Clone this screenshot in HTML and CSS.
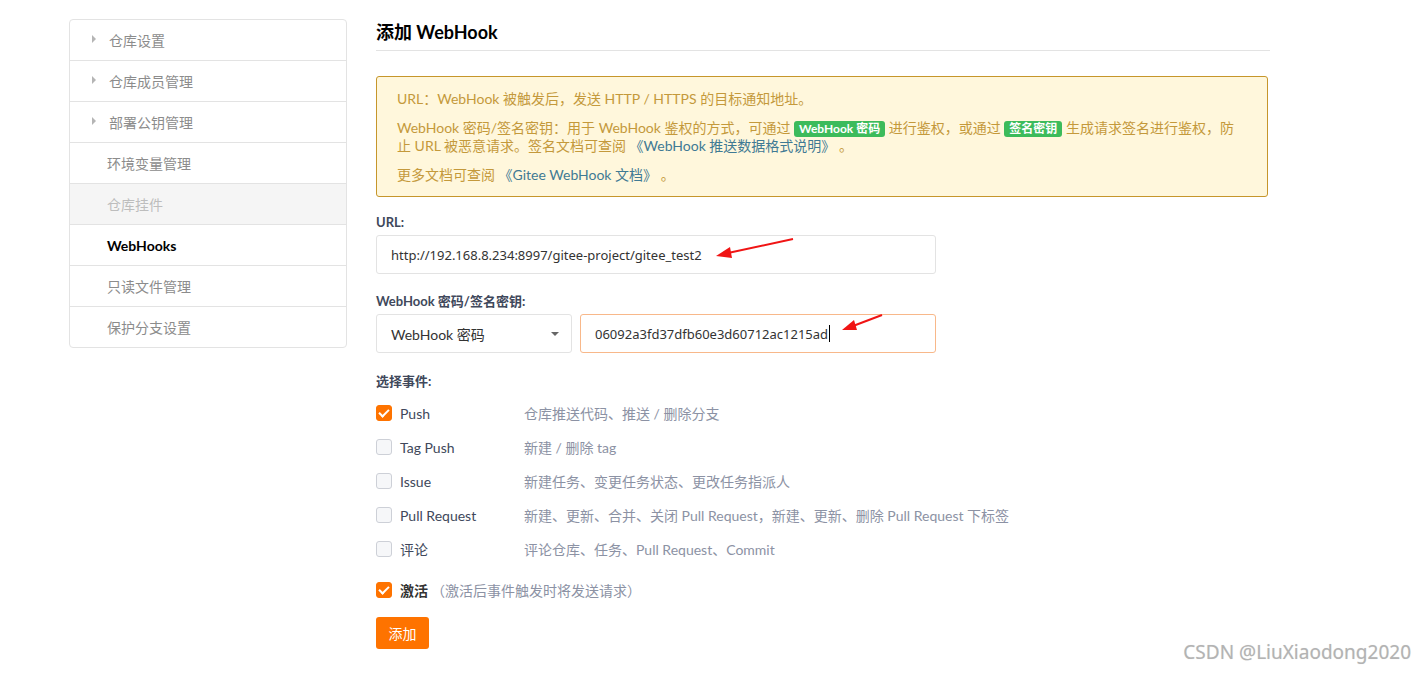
FILE: index.html
```html
<!DOCTYPE html>
<html lang="zh-CN">
<head>
    <meta charset="UTF-8">
    <title>添加 WebHook</title>
    <link rel="stylesheet" href="styles.css">
</head>
<body>
    <div class="page">
        <!-- Settings menu -->
        <ul class="side-menu">
            <li class="menu-item has-sub"><span class="caret-right"></span>仓库设置</li>
            <li class="menu-item has-sub"><span class="caret-right"></span>仓库成员管理</li>
            <li class="menu-item has-sub"><span class="caret-right"></span>部署公钥管理</li>
            <li class="menu-item">环境变量管理</li>
            <li class="menu-item disabled">仓库挂件</li>
            <li class="menu-item active">WebHooks</li>
            <li class="menu-item">只读文件管理</li>
            <li class="menu-item">保护分支设置</li>
        </ul>

        <div class="main">
            <h2 class="main-title">添加 WebHook</h2>

            <div class="notice">
                <p>URL：WebHook 被触发后，发送 HTTP / HTTPS 的目标通知地址。</p>
                <p>WebHook 密码/签名密钥：用于 WebHook 鉴权的方式，可通过 <span class="tag">WebHook 密码</span> 进行鉴权，或通过 <span class="tag">签名密钥</span> 生成请求签名进行鉴权，防止 URL 被恶意请求。签名文档可查阅 <a href="#">《WebHook 推送数据格式说明》</a> 。</p>
                <p>更多文档可查阅 <a href="#">《Gitee WebHook 文档》</a> 。</p>
            </div>

            <form class="hook-form">
                <label class="field-label">URL:</label>
                <div class="text-field url-field">http://192.168.8.234:8997/gitee-project/gitee_test2</div>

                <label class="field-label">WebHook 密码/签名密钥:</label>
                <div class="secret-row">
                    <div class="select-field">WebHook 密码<span class="caret-down"></span></div>
                    <div class="text-field focused">06092a3fd37dfb60e3d60712ac1215ad<span class="text-caret"></span></div>
                </div>

                <label class="field-label">选择事件:</label>
                <div class="events">
                    <div class="event-row">
                        <span class="check checked"></span>
                        <span class="event-name">Push</span>
                        <span class="event-desc">仓库推送代码、推送 / 删除分支</span>
                    </div>
                    <div class="event-row">
                        <span class="check"></span>
                        <span class="event-name">Tag Push</span>
                        <span class="event-desc">新建 / 删除 tag</span>
                    </div>
                    <div class="event-row">
                        <span class="check"></span>
                        <span class="event-name">Issue</span>
                        <span class="event-desc">新建任务、变更任务状态、更改任务指派人</span>
                    </div>
                    <div class="event-row">
                        <span class="check"></span>
                        <span class="event-name">Pull Request</span>
                        <span class="event-desc">新建、更新、合并、关闭 Pull Request，新建、更新、删除 Pull Request 下标签</span>
                    </div>
                    <div class="event-row">
                        <span class="check"></span>
                        <span class="event-name">评论</span>
                        <span class="event-desc">评论仓库、任务、Pull Request、Commit</span>
                    </div>
                </div>

                <div class="active-row">
                    <span class="check checked"></span>
                    <span class="active-name">激活</span>
                    <span class="active-hint">（激活后事件触发时将发送请求）</span>
                </div>

                <button type="button" class="btn-add">添加</button>
            </form>
        </div>
    </div>

    <!-- Red annotation arrows drawn over the screenshot -->
    <svg class="annotations" width="1425" height="673" viewBox="0 0 1425 673">
        <line x1="793" y1="239" x2="728" y2="253" stroke="#f01414" stroke-width="2"/>
        <polygon points="716,256 730,247 732,258" fill="#f01414"/>
        <line x1="882" y1="315" x2="853" y2="326" stroke="#f01414" stroke-width="2"/>
        <polygon points="842,330 854,320 857,330" fill="#f01414"/>
    </svg>

    <div class="watermark">CSDN @LiuXiaodong2020</div>
</body>
</html>
```

FILE: styles.css
```css
:root {
    --border: #e3e3e3;
    --text-dark: #40485b;
    --text-gray: #8c92a4;
    --orange: #fe7300;
    --notice-bg: #fff7dc;
    --notice-border: #c6962b;
    --notice-text: #c4993b;
    --link: #3f7a94;
    --green: #3cbb5b;
}

html,
body {
    min-height: 100vh;
}

body {
    margin: 0;
    padding: 0;
    font-family: Lato, "Noto Sans CJK SC", sans-serif;
    font-size: 14px;
    color: var(--text-dark);
    background: #fff;
    position: relative;
}

.page {
    display: flex;
    align-items: flex-start;
    padding: 19px 0 0 69px;
    gap: 29px;
}

/* Left menu */
.side-menu {
    list-style: none;
    margin: 0;
    padding: 0;
    width: 276px;
    border: 1px solid var(--border);
    border-radius: 4px;
    overflow: hidden;
}

.menu-item {
    height: 40px;
    display: flex;
    align-items: center;
    padding-left: 37px;
    font-size: 14px;
    color: #8c8c8c;
    border-bottom: 1px solid var(--border);
}

.menu-item:last-child {
    border-bottom: none;
}

.menu-item.has-sub {
    padding-left: 22px;
}

.caret-right {
    width: 0;
    height: 0;
    border-top: 4px solid transparent;
    border-bottom: 4px solid transparent;
    border-left: 4px solid #b5b5b5;
    margin-right: 13px;
    margin-top: -2px;
}

.menu-item.disabled {
    background: #f5f5f5;
    color: #bdbdbd;
}

.menu-item.active {
    color: #000;
    font-weight: bold;
}

/* Main column */
.main {
    width: 894px;
}

.main-title {
    margin: 0;
    font-size: 18px;
    font-weight: bold;
    color: #000;
    line-height: 26px;
    padding-bottom: 5px;
    border-bottom: 1px solid var(--border);
}

.notice {
    box-sizing: border-box;
    margin-top: 25px;
    width: 892px;
    padding: 13px 28px 12px 20px;
    background: var(--notice-bg);
    border: 1px solid var(--notice-border);
    border-radius: 3px;
    color: var(--notice-text);
    line-height: 18px;
}

.notice p {
    margin: 0 0 11px;
}

.notice p:last-child {
    margin-bottom: 0;
}

.notice a {
    color: var(--link);
    text-decoration: none;
}

.tag {
    display: inline-block;
    background: var(--green);
    color: #fff;
    font-size: 12px;
    font-weight: bold;
    line-height: 16px;
    padding: 0 5px;
    border-radius: 3px;
}

/* Form */
.hook-form {
    margin-top: 16px;
}

.field-label {
    display: block;
    font-size: 13px;
    font-weight: bold;
    line-height: 18px;
    margin-bottom: 4px;
}

.text-field {
    box-sizing: border-box;
    width: 560px;
    height: 39px;
    display: flex;
    align-items: center;
    padding-left: 14px;
    border: 1px solid var(--border);
    border-radius: 3px;
    font-family: "Noto Sans", "Noto Sans CJK SC", sans-serif;
    font-size: 13px;
    color: #333;
}

.url-field {
    margin-bottom: 18px;
}

.secret-row {
    display: flex;
    gap: 8px;
    margin-bottom: 19px;
}

.select-field {
    box-sizing: border-box;
    width: 196px;
    height: 39px;
    display: flex;
    align-items: center;
    justify-content: space-between;
    padding: 0 12px 0 14px;
    border: 1px solid var(--border);
    border-radius: 3px;
    color: #333;
}

.caret-down {
    width: 0;
    height: 0;
    border-left: 4px solid transparent;
    border-right: 4px solid transparent;
    border-top: 4px solid #666;
}

.secret-row .text-field {
    width: 356px;
}

.text-field.focused {
    border-color: #f8b88a;
}

.text-caret {
    display: inline-block;
    width: 1px;
    height: 17px;
    background: #000;
    margin-left: 1px;
}

.events {
    margin-top: 6px;
}

.event-row,
.active-row {
    display: flex;
    align-items: center;
    height: 34px;
}

.check {
    box-sizing: border-box;
    width: 16px;
    height: 16px;
    border: 1px solid #cdd0d7;
    border-radius: 3px;
    background: #f6f7f9;
    margin-right: 8px;
    position: relative;
}

.check.checked {
    background: var(--orange);
    border-color: var(--orange);
}

.check.checked::after {
    content: "";
    position: absolute;
    left: 4px;
    top: 1px;
    width: 4px;
    height: 8px;
    border-right: 2.5px solid #fff;
    border-bottom: 2.5px solid #fff;
    transform: rotate(45deg);
}

.event-name {
    width: 124px;
    color: var(--text-dark);
}

.event-desc {
    color: var(--text-gray);
}

.active-row {
    margin-top: 7px;
}

.active-name {
    font-weight: bold;
    color: #333;
    margin-right: 3px;
}

.active-hint {
    color: var(--text-gray);
}

.btn-add {
    display: block;
    margin-top: 10px;
    width: 53px;
    height: 32px;
    border: none;
    border-radius: 3px;
    background: var(--orange);
    color: #fff;
    font-family: inherit;
    font-size: 14px;
    cursor: pointer;
}

/* Overlays */
.annotations {
    position: absolute;
    top: 0;
    left: 0;
    pointer-events: none;
}

.watermark {
    position: absolute;
    top: 640px;
    right: 14px;
    font-family: "Noto Sans", sans-serif;
    font-size: 19px;
    line-height: 24px;
    color: #b3b3b3;
    text-shadow: 0 0 1px #ddd;
}
```
